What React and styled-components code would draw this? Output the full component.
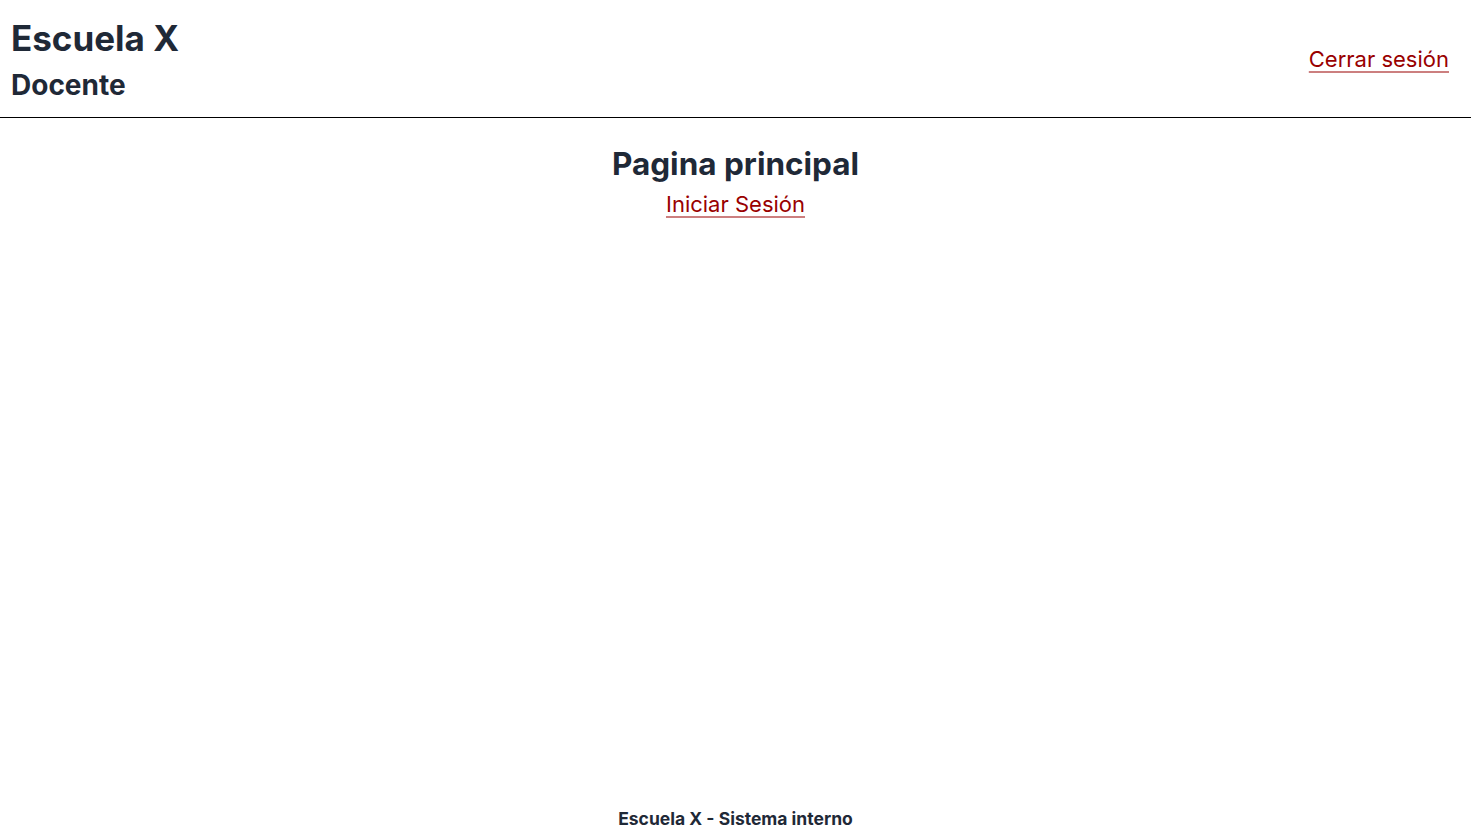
import React from 'react';
import styled, { createGlobalStyle } from 'styled-components';

const GlobalStyle = createGlobalStyle`
  html, body, #root {
    margin: 0;
    padding: 0;
    height: 100%;
  }
  body {
    font-family: Inter, "Noto Sans", sans-serif;
    color: #1f2937;
    background: #ffffff;
  }
`;

const Page = styled.div`
  min-height: 100vh;
  display: flex;
  flex-direction: column;
`;

const Header = styled.header`
  display: flex;
  align-items: center;
  justify-content: space-between;
  padding: 16px 22px 14px 11px;
  border-bottom: 1px solid #000;
`;

const Brand = styled.div`
  display: flex;
  flex-direction: column;
  gap: 7px;
`;

const Title = styled.h1`
  margin: 0;
  font-size: 35px;
  font-weight: 700;
  line-height: 44px;
`;

const Role = styled.h2`
  margin: 0;
  font-size: 28px;
  font-weight: 700;
  line-height: 36px;
`;

const Link = styled.a`
  color: #990000;
  font-size: 22px;
  text-decoration: underline;
  text-decoration-color: rgba(153, 0, 0, 0.5);
  text-underline-offset: 4px;
  cursor: pointer;
  margin-bottom: ${props => props.$lift || '0'};
`;

const Main = styled.main`
  flex: 1;
  display: flex;
  flex-direction: column;
  align-items: center;
  padding-top: 26px;
`;

const Heading = styled.h2`
  margin: 0 0 7px;
  font-size: 31.5px;
  font-weight: 700;
  line-height: 40px;
`;

const Footer = styled.footer`
  text-align: center;
  font-size: 17.5px;
  font-weight: 700;
  padding: 0 0 3px;
`;

const App = () => {
  return (
    <Page>
      <GlobalStyle />
      <Header>
        <Brand>
          <Title>Escuela X</Title>
          <Role>Docente</Role>
        </Brand>
        <Link href="#" $lift="2px">Cerrar sesión</Link>
      </Header>
      <Main>
        <Heading>Pagina principal</Heading>
        <Link href="#">Iniciar Sesión</Link>
      </Main>
      <Footer>Escuela X - Sistema interno</Footer>
    </Page>
  );
};

export default App;
